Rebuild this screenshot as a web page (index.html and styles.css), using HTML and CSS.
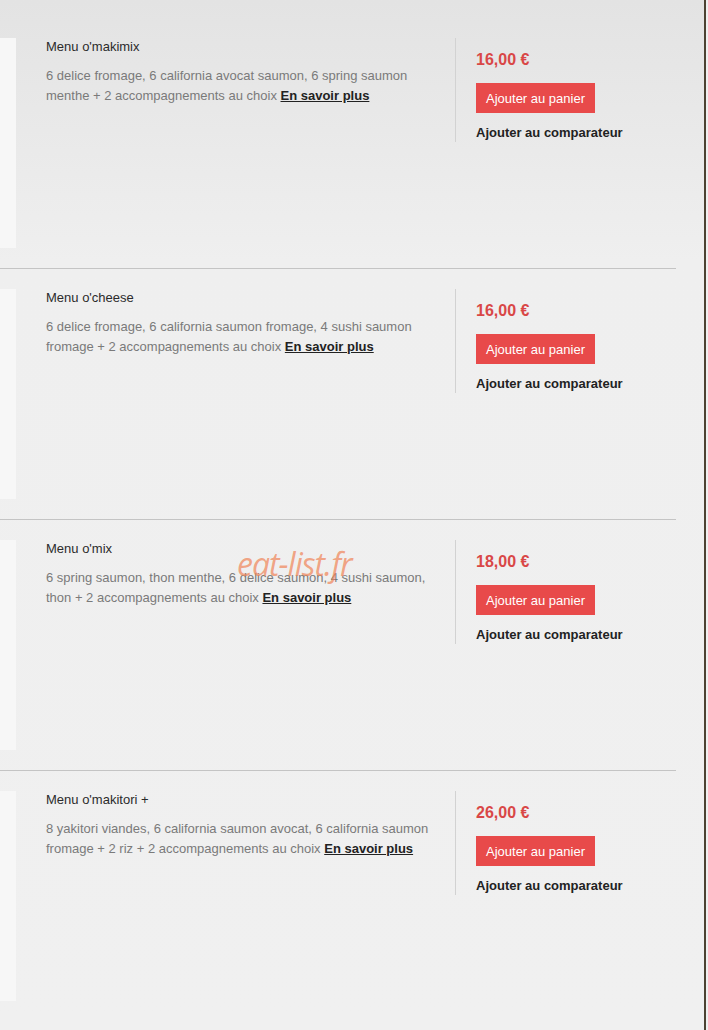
FILE: index.html
```html
<!DOCTYPE html>
<html lang="fr">
<head>
    <meta charset="UTF-8">
    <meta name="viewport" content="width=device-width, initial-scale=1.0">
    <title>Menus</title>
    <link rel="stylesheet" href="styles.css">
</head>
<body>
    <div class="page">
        <div class="watermark">eat-list.fr</div>
        <div class="product">
            <div class="thumb"></div>
            <div class="info">
                <div class="name">Menu o'makimix</div>
                <p class="desc">6 delice fromage, 6 california avocat saumon, 6 spring saumon menthe + 2 accompagnements au choix <a href="#">En savoir plus</a></p>
            </div>
            <div class="buy">
                <div class="price">16,00 €</div>
                <button class="add-cart">Ajouter au panier</button>
                <a class="compare" href="#">Ajouter au comparateur</a>
            </div>
        </div>
        <div class="product">
            <div class="thumb"></div>
            <div class="info">
                <div class="name">Menu o'cheese</div>
                <p class="desc">6 delice fromage, 6 california saumon fromage, 4 sushi saumon fromage + 2 accompagnements au choix <a href="#">En savoir plus</a></p>
            </div>
            <div class="buy">
                <div class="price">16,00 €</div>
                <button class="add-cart">Ajouter au panier</button>
                <a class="compare" href="#">Ajouter au comparateur</a>
            </div>
        </div>
        <div class="product">
            <div class="thumb"></div>
            <div class="info">
                <div class="name">Menu o'mix</div>
                <p class="desc">6 spring saumon, thon menthe, 6 delice saumon, 4 sushi saumon, thon + 2 accompagnements au choix <a href="#">En savoir plus</a></p>
            </div>
            <div class="buy">
                <div class="price">18,00 €</div>
                <button class="add-cart">Ajouter au panier</button>
                <a class="compare" href="#">Ajouter au comparateur</a>
            </div>
        </div>
        <div class="product">
            <div class="thumb"></div>
            <div class="info">
                <div class="name">Menu o'makitori +</div>
                <p class="desc">8 yakitori viandes, 6 california saumon avocat, 6 california saumon fromage + 2 riz + 2 accompagnements au choix <a href="#">En savoir plus</a></p>
            </div>
            <div class="buy">
                <div class="price">26,00 €</div>
                <button class="add-cart">Ajouter au panier</button>
                <a class="compare" href="#">Ajouter au comparateur</a>
            </div>
        </div>
    </div>
</body>
</html>
```

FILE: styles.css
```css
body {
    margin: 0;
    font-family: "Liberation Sans", Arial, sans-serif;
    font-size: 13px;
    background: #f0f0f0;
}
.page {
    position: relative;
    width: 706px;
    min-height: 1030px;
    border-right: 2px solid #4b4232;
    padding-top: 18px;
    box-sizing: border-box;
    background: linear-gradient(#e3e3e3, #efefef 260px, #f0f0f0);
}
.product {
    display: flex;
    width: 676px;
    padding: 20px 0;
    border-bottom: 1px solid #c4c4c4;
}
.product:last-child {
    border-bottom: none;
}
.thumb {
    width: 16px;
    height: 210px;
    background-color: #f7f7f7;
    flex-shrink: 0;
}
.info {
    flex: 1;
    padding: 0 20px 0 30px;
}
.name {
    color: #2b2b2b;
    line-height: 18px;
    margin-bottom: 10px;
}
.desc {
    margin: 0;
    color: #7a7a7a;
    line-height: 20px;
}
.desc a {
    color: #222;
    font-weight: bold;
    text-decoration: underline;
}
.buy {
    width: 200px;
    flex-shrink: 0;
    align-self: flex-start;
    border-left: 1px solid #d2d2d2;
    padding: 12px 0 1px 20px;
}
.price {
    color: #d94747;
    font-size: 16px;
    font-weight: bold;
    line-height: 20px;
    margin-bottom: 13px;
}
.add-cart {
    display: block;
    height: 30px;
    padding: 0 10px;
    border: none;
    background-color: #e84a4a;
    color: white;
    font-family: inherit;
    font-size: 13px;
    margin-bottom: 12px;
}
.compare {
    display: block;
    color: #222;
    font-weight: bold;
    line-height: 16px;
    text-decoration: none;
}
.watermark {
    position: absolute;
    left: 237px;
    top: 542px;
    font-family: "Open Sans", sans-serif;
    font-style: italic;
    font-size: 32px;
    color: rgba(240, 130, 85, 0.7);
    letter-spacing: -1px;
    pointer-events: none;
}
```
